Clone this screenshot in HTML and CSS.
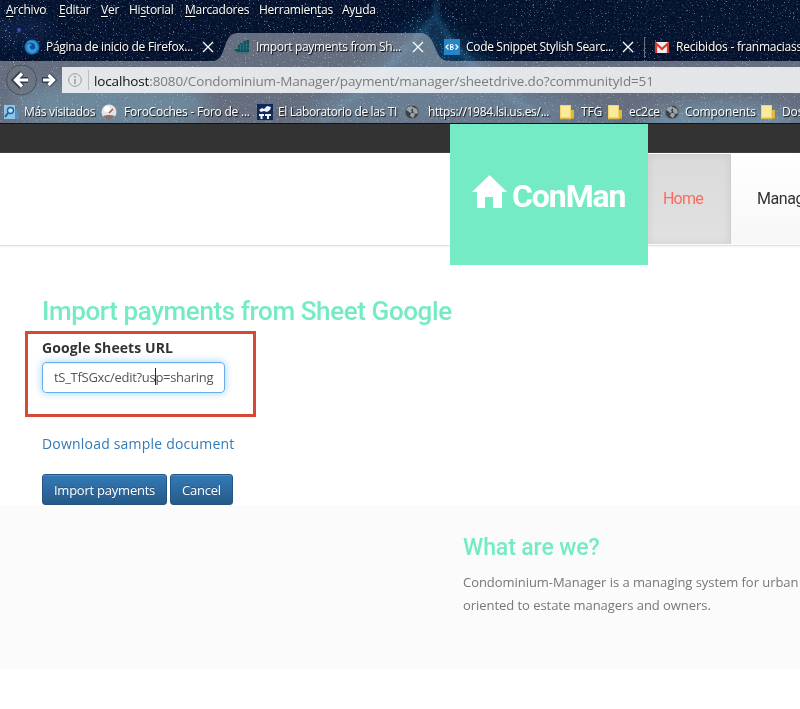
FILE: index.html
```html
<!DOCTYPE html>
<html lang="es">
<head>
<meta charset="utf-8">
<title>ConMan</title>
<link rel="stylesheet" href="styles.css">
</head>
<body>
<svg class="defs" width="0" height="0" aria-hidden="true">
  <defs>
    <g id="close"><path d="M1 1l10 10M11 1L1 11" stroke="#fff" stroke-width="1.3" fill="none"/></g>
    <g id="folder"><path d="M0 1h11v14H0z" fill="#f1d665"/><path d="M11 6h3v8l-3 1z" fill="#e3b93c"/><path d="M1 2h9v11H1z" fill="#f9eaa0"/><path d="M0 15h11l3-1" stroke="#c79b2a" fill="none"/></g>
    <g id="globe"><circle cx="8" cy="8" r="7" fill="#3a4148" stroke="#737b83"/><path d="M2 6l2-3 4-1 1 2-2 2 1 2-2 1-2-2zM9 3l4 2 1 4-2 1-2-1-1-2zM7 9l3 0 1 2-2 3-3-2z" fill="#9aa3a9"/></g>
  </defs>
</svg>
<header class="chrome">
  <svg class="sky" width="800" height="124" aria-hidden="true">
    <defs>
      <filter id="stars" x="0" y="0" width="100%" height="100%" color-interpolation-filters="sRGB">
        <feTurbulence type="fractalNoise" baseFrequency=".75" numOctaves="2" seed="8"/>
        <feColorMatrix values="0 0 0 0 .6  0 0 0 0 .72  0 0 0 0 .84  6 5 0 0 -6.8"/>
      </filter>
      <filter id="grain" x="0" y="0" width="100%" height="100%" color-interpolation-filters="sRGB">
        <feTurbulence type="fractalNoise" baseFrequency=".5" numOctaves="3" seed="3"/>
        <feColorMatrix values="0 0 0 0 .2  0 0 0 0 .36  0 0 0 0 .55  2 1 0 0 -1.3"/>
      </filter>
      <filter id="soft"><feGaussianBlur stdDeviation="9"/></filter>
      <filter id="thin"><feGaussianBlur stdDeviation="2.5"/></filter>
    </defs>
    <rect width="800" height="124" fill="#04102a"/>
    <g filter="url(#soft)">
      <ellipse cx="110" cy="105" rx="100" ry="26" fill="#1d6689" opacity=".65"/>
      <path d="M290 124L430 15L520 90L640 124z" fill="#145079" opacity=".55"/>
      <ellipse cx="720" cy="125" rx="80" ry="22" fill="#246e99" opacity=".7"/>
      <ellipse cx="20" cy="30" rx="35" ry="12" fill="#173f78" opacity=".35"/>
    </g>
    <path d="M320 124Q390 70 436 16Q455 60 550 124M436 0v20" fill="none" stroke="#2e8cb9" stroke-width="4" opacity=".4" filter="url(#thin)"/>
    <circle cx="19" cy="30" r="2" fill="#4660cc" opacity=".8"/>
    <rect width="800" height="124" filter="url(#grain)" opacity=".3"/>
    <rect width="800" height="124" filter="url(#stars)" opacity=".6"/>
    <path d="M0 61H212C228 61 221 33 238 33H420C438 33 432 61 449 61H800V124H0z" fill="#c6c8cd" fill-opacity=".5"/>
    <path d="M0 123.5h800" stroke="#071728"/>
  </svg>
  <nav class="menu">
    <span><u>A</u>rchivo</span><span><u>E</u>ditar</span><span><u>V</u>er</span><span>Hi<u>s</u>torial</span><span><u>M</u>arcadores</span><span>Herramien<u>t</u>as</span><span>Ay<u>u</u>da</span>
  </nav>
  <div class="tabs">
    <div class="tab"><svg width="16" height="16"><circle cx="8" cy="8" r="7.5" fill="#1676bd"/><path d="M3 3q5-3 9 1q3 4 0 8q-4 4-8 0q-3-4 0-7l2 0q3 0 4 2l-3 1q-1 3 2 3q4-1 2-5q-3-4-8-2z" fill="#3d9bdc"/><path d="M6 4q4-1 5 3q0 4-4 3q-2-1-1-3l2-1z" fill="#104f91"/></svg><b class="t1">Página de inicio de Firefox...</b><svg class="x" width="12" height="12"><use href="#close"/></svg></div>
    <div class="tab"><svg width="16" height="16"><path d="M1 10h3V6h2V4h3V2h3V1h3v12H3v-1H1z" fill="#164d59"/><path d="M6.500 5v7M9.500 3v9M12.500 2v10M4 9h11M5 6h10" stroke="#226f7a" fill="none"/><path d="M0 11l4 3h10" stroke="#226f7a" fill="none"/></svg><b class="t2">Import payments from Sh...</b><svg class="x" width="12" height="12"><use href="#close"/></svg></div>
    <div class="tab"><svg width="16" height="16"><rect width="16" height="16" fill="#2486c8"/><path d="M4.500 5.500L2 8l2.500 2.500M11.500 5.500L14 8l-2.500 2.500" stroke="#fff" stroke-width="1.200" fill="none"/><path d="M6.500 5.500h2q1.500 1.200 0 2.500h-2zm0 2.500h2q2 1.300 0 2.500h-2z" stroke="#fff" fill="none"/></svg><b class="t3">Code Snippet Stylish Searc...</b><svg class="x" width="12" height="12"><use href="#close"/></svg></div>
    <div class="tab last"><svg width="16" height="16"><path d="M1 3h14v11H1z" fill="#eee"/><path d="M2 14V4.500L8 10l6-5.500V14" stroke="#d93a30" stroke-width="2.200" fill="none"/></svg><b class="t4">Recibidos - franmaciass</b></div>
  </div>
  <div class="bar">
    <svg class="arrows" width="62" height="34"><circle cx="21.500" cy="17" r="15" fill="#6f7680" fill-opacity=".65" stroke="#39424f" stroke-opacity=".7"/><path d="M22 10l-7 7 7 7M15 17h13" stroke="#303b4b" stroke-width="6" fill="none"/><path d="M42 17h10M48 12l5 5-5 5" stroke="#303b4b" stroke-width="6" fill="none"/><path d="M22 10.500L15.500 17l6.500 6.500M16 17h12" stroke="#fff" stroke-width="3.200" fill="none"/><path d="M43 17h10M48.500 12l5 5-5 5" stroke="#fff" stroke-width="3.200" fill="none"/></svg>
    <div class="url"><svg width="14" height="14"><circle cx="7" cy="7" r="6.300" fill="none" stroke="#999"/><path d="M7 6v5M7 3v1.700" stroke="#999" stroke-width="1.500"/></svg><i></i><p><span>localhost</span>:8080/Condominium-Manager/payment/manager/sheetdrive.do?communityId=51</p></div>
  </div>
  <div class="marks">
    <span><svg width="16" height="16"><path d="M1 1h11v14H1z" fill="#8fc4ea"/><path d="M12 5h3v10h-3z" fill="#4c91c6"/><circle cx="7.500" cy="6.500" r="3" fill="#bde5fb" stroke="#245f92" stroke-width="1.400"/><path d="M5 9l-3 4" stroke="#245f92" stroke-width="2"/></svg><b class="m1">Más visitados</b></span>
    <span><svg width="16" height="16"><circle cx="8" cy="8" r="7.500" fill="#e4e4e4"/><path d="M2 12q6-2 12 0q-3 4-6 4t-6-4" fill="#85736e"/><path d="M8 9l4-4" stroke="#c43d36" stroke-width="1.300"/><circle cx="6" cy="5" r="3" fill="#fff"/></svg><b class="m2">ForoCoches - Foro de ...</b></span>
    <span><svg width="16" height="16"><rect width="16" height="16" fill="#10285a"/><path d="M2 6l3-2 2 1 3-3 4 1-1 3-3 2-3-1-3 1zM2 10h5v2H5.500v3h-2v-3H2zM8 10h6v2h-2v3h-2v-3H8z" fill="#eef3fa"/></svg><b class="m3">El Laboratorio de las TI</b></span>
    <span><svg width="16" height="16"><use href="#globe"/></svg><b class="m4">https://1984.lsi.us.es/...</b></span>
    <span><svg width="16" height="16"><use href="#folder"/></svg><b class="m5">TFG</b></span>
    <span><svg width="16" height="16"><use href="#folder"/></svg><b class="m6">ec2ce</b></span>
    <span><svg width="16" height="16"><use href="#globe"/></svg><b class="m7">Components</b></span>
    <span><svg width="16" height="16"><use href="#folder"/></svg><b>Dos</b></span>
  </div>
</header>
<div class="topbar"></div>
<div class="head">
  <div class="logo"><svg width="36" height="34"><path d="M17.500 0L35 17h-5v16h-9V22h-8v11H5V17H0z" fill="#fff"/></svg><span>ConMan</span></div>
  <nav class="nav"><a class="home"><span>Home</span></a><a class="manage"><span>Manag</span></a></nav>
</div>
<main>
  <h1><span>Import payments from Sheet Google</span></h1>
  <div class="field">
    <label>Google Sheets URL</label>
    <div class="input"><span>tS_TfSGxc/edit?us</span><i></i><span>p=sharing</span></div>
  </div>
  <a class="download">Download sample document</a>
  <div class="buttons"><button class="imp">Import payments</button><button class="can">Cancel</button></div>
</main>
<footer>
  <h2><span>What are we?</span></h2>
  <p><span class="l1">Condominium-Manager is a managing system for urban</span><br><span class="l2">oriented to estate managers and owners.</span></p>
</footer>
</body>
</html>
```

FILE: styles.css
```css
* { box-sizing: border-box; }
body { margin: 0; width: 800px; height: 709px; overflow: hidden; background: #fff; font-family: "Open Sans", sans-serif; color: #333; }
h1, h2, p { margin: 0; }
svg { display: block; flex: none; }
.defs { position: absolute; }
b { font-weight: 400; }
.chrome { position: relative; height: 124px; color: #fff; font: 12px/20px "Open Sans", "Noto Sans", sans-serif; overflow: hidden; white-space: nowrap; }
.sky { position: absolute; left: 0; top: 0; z-index: -1; }
.menu { display: grid; grid-template-columns: 53px 42px 28px 56px 74px 83px 60px; height: 33px; padding-left: 6px; letter-spacing: -.25px; text-shadow: 0 1px 1px #000; }
.menu u { text-underline-offset: 2px; text-decoration-thickness: 1px; }
.tabs { display: grid; grid-template-columns: repeat(3, 210px) 170px; height: 28px; text-shadow: 1px 1px 1px #000; }
.tab { display: flex; align-items: center; padding-left: 24px; }
.tab b { flex: none; width: 156px; margin-left: 6px; }
.last { position: relative; }
.tab.last b { width: 124px; }
.last::before { content: ""; position: absolute; left: 14px; top: 4px; width: 1px; height: 21px; background: #66717d; }
.t1 { letter-spacing: -.28px; }
.t2 { letter-spacing: -.33px; }
.t3 { letter-spacing: -.32px; }
.t4 { letter-spacing: -.23px; }
.bar { display: flex; height: 38px; padding-top: 2px; }
.url { display: flex; align-items: center; width: 738px; height: 26px; margin-top: 4px; background: rgba(248, 249, 250, .86); color: #7c7c7c; padding-left: 6px; }
.url i { width: 1px; height: 20px; background: #bbb; margin: 0 5px 0 6px; }
.url p { font-size: 13.5px; letter-spacing: -.14px; padding-top: 2px; }
.url p span { color: #111; }
.marks { display: grid; grid-template-columns: 98px 156px 147px 156px 48px 56px 97px 39px; padding: 2px 0 1px 3px; height: 25px; text-shadow: 1px 1px 1px #111; }
.marks span { display: flex; align-items: center; }
.marks b { margin-left: 5px; letter-spacing: -.1px; }
.marks .m1 { letter-spacing: -.32px; }
.marks .m2 { margin-left: 7px; letter-spacing: -.23px; }
.marks .m3 { letter-spacing: -.35px; }
.marks .m4 { margin-left: 8px; letter-spacing: -.3px; }
.marks .m5, .marks .m6 { letter-spacing: -.2px; }
.topbar { height: 29px; background: #333; }
.head { display: flex; height: 93px; padding-left: 450px; border-bottom: 1px solid #ddd; box-shadow: 0 1px 2px #f3f3f3; }
.logo { position: relative; display: flex; width: 198px; height: 141px; margin-top: -29px; padding: 51px 0 0 22px; background: #74ebc4; color: #fff; flex: none; }
.logo span { font: 700 32px/40px Roboto, sans-serif; margin: 1px 0 0 4px; letter-spacing: -1.1px; }
.nav { display: flex; font: 16px/90px Roboto, sans-serif; padding-top: 1px; height: 91px; }
.nav a { flex: none; }
.home { width: 83px; padding-left: 15px; color: #fb6b61; background: linear-gradient(#dadada, #e1e1e1); border-right: 1px solid #ccc; box-shadow: inset 0 0 8px rgba(0,0,0,.08); letter-spacing: -.8px; }
.manage { width: 69px; overflow: hidden; padding-left: 26px; background: linear-gradient(#fff, #f7f7f7); color: #333; letter-spacing: -.4px; }
main { height: 259px; padding: 48px 0 0 25px; }
h1 { height: 37px; padding-left: 17px; font: 500 26px/34px Roboto, sans-serif; letter-spacing: -.39px; color: #74ebc4; white-space: nowrap; }
.field { width: 231px; height: 86px; border: 3px solid #d64937; padding: 4px 0 0 14px; }
label { display: block; height: 24px; font: 700 14px/20px "Open Sans", sans-serif; letter-spacing: .1px; color: #333; }
.input { display: flex; align-items: center; width: 183px; height: 31px; border: 1px solid #66afe9; border-radius: 4px; padding: 0 0 2px 11px; font-size: 13px; letter-spacing: -.29px; color: #555; white-space: nowrap; box-shadow: 0 0 8px rgba(102,175,233,.6), inset 0 1px 1px rgba(0,0,0,.075); }
.input i { width: 1px; height: 17px; margin-right: -1px; background: #222; }
.download { display: block; margin: 17px 0 0 17px; height: 40px; font-size: 14px; line-height: 20px; letter-spacing: .2px; color: #337ab7; }
.buttons { display: flex; gap: 3px; padding-left: 17px; }
button { height: 31px; border: 1px solid #245580; border-radius: 3px; padding: 0; color: #fff; background: linear-gradient(#337ab7, #265a88); font: 13px/20px "Open Sans", sans-serif; letter-spacing: -.23px; text-shadow: 0 -1px 0 rgba(0,0,0,.2); box-shadow: inset 0 1px 0 rgba(255,255,255,.15); }
.imp { width: 125px; }
.can { width: 63px; }
footer { height: 164px; background: #fbfbfb; padding: 27px 0 0 463px; color: #777; }
h2 { height: 39px; font: 500 23px/32px Roboto, sans-serif; letter-spacing: -.1px; color: #74ebc4; }
footer p { font-size: 13px; line-height: 23px; letter-spacing: -.05px; white-space: nowrap; }
```
